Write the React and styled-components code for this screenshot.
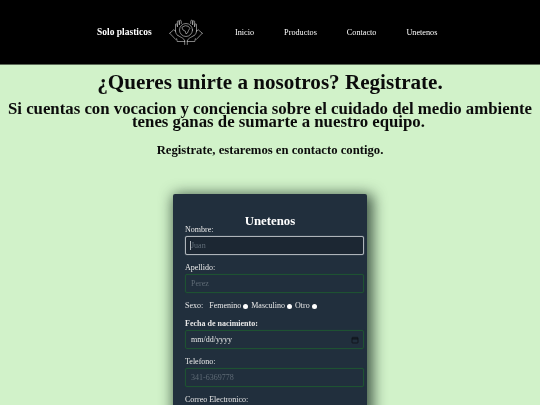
import React from "react";
import styled, { createGlobalStyle } from "styled-components";

const GlobalStyle = createGlobalStyle`
  html, body {
    margin: 0;
    padding: 0;
    height: 405px;
    overflow: hidden;
    background-color: #d1f2c9;
    font-family: "Liberation Serif", "Times New Roman", serif;
  }

  #root {
    will-change: transform;
  }
`;

const Logo = () => (
  <LogoSvg viewBox="0 0 34 26" fill="none" stroke="#d6d6d6" strokeWidth="0.6" strokeLinejoin="round" strokeLinecap="round">
    <circle cx="17" cy="11" r="6.500" />
    <path d="M13.500 8l2.800-1.300 3 .6 1.600 2-1.300 2-1.100 2.600-1.500 1-.7-2.700-2.200-1.100-.9-1.800z" />
    <path d="M6.500 12V5.500c0-1 1.400-1 1.500 0l.4 2M8.400 7.500V2.500c0-1 1.600-1 1.700 0l.3 3M10.400 5.500V2c0-1.100 1.700-1.100 1.800 0l.1 2.500" />
    <path d="M27.500 12V5.500c0-1-1.400-1-1.500 0l-.4 2M25.600 7.500V2.500c0-1-1.600-1-1.700 0l-.3 3M23.600 5.500V2c0-1.100-1.700-1.100-1.800 0l-.1 2.500" />
    <path d="M6.500 12c0 1.800.8 3.200 2.200 4.400M27.500 12c0 1.800-.8 3.200-2.200 4.400" />
    <path d="M.7 14.200l4-3.400 1.800 1.200M33.300 14.200l-4-3.400-1.800 1.200" />
    <path d="M8.700 16.400l4 2.200c1.700 1 2.800 1.900 3 3.400M25.300 16.400l-4 2.200c-1.700 1-2.800 1.900-3 3.400" />
    <path d="M.7 14.200l6 6.300 1-.8.5 2.800h7.500M33.300 14.200l-6 6.300-1-.8-.5 2.800h-7.500" />
    <path d="M15.700 22v3.500M18.300 22v3.500" />
  </LogoSvg>
);

const App = () => (
  <>
    <GlobalStyle />
    <Header>
      <Brand>Solo plasticos</Brand>
      <Logo />
      <Nav>
        <NavLink href="#">Inicio</NavLink>
        <NavLink href="#">Productos</NavLink>
        <NavLink href="#">Contacto</NavLink>
        <NavLink href="#">Unetenos</NavLink>
      </Nav>
    </Header>
    <Main>
      <Title>¿Queres unirte a nosotros? Registrate.</Title>
      <Subtitle>
        Si cuentas con vocacion y conciencia sobre el cuidado del medio ambiente
        <SubtitleTail>tenes ganas de sumarte a nuestro equipo.</SubtitleTail>
      </Subtitle>
      <Note>Registrate, estaremos en contacto contigo.</Note>
      <Card>
        <CardTitle>Unetenos</CardTitle>
        <Field>
          <Label>Nombre:</Label>
          <InputWrap>
            <Input placeholder="Juan" $focused />
            <Caret />
          </InputWrap>
        </Field>
        <Field>
          <Label>Apellido:</Label>
          <Input placeholder="Perez" />
        </Field>
        <SexRow>
          <SexLabel>Sexo:</SexLabel>
          <Option>Femenino</Option>
          <Radio />
          <Option>Masculino</Option>
          <Radio />
          <Option>Otro</Option>
          <Radio />
        </SexRow>
        <Field>
          <Label $bold>Fecha de nacimiento:</Label>
          <DateBox>
            mm/dd/yyyy
            <CalendarIcon viewBox="0 0 12 12" fill="none" stroke="#0c0f14" strokeWidth="1.1">
              <rect x="1.500" y="2" width="9" height="8.500" rx="1" />
              <path d="M1.500 4.300h9" strokeWidth="1.600" />
            </CalendarIcon>
          </DateBox>
        </Field>
        <Field>
          <Label>Telefono:</Label>
          <Input placeholder="341-6369778" />
        </Field>
        <Field>
          <Label>Correo Electronico:</Label>
        </Field>
      </Card>
    </Main>
  </>
);

const Header = styled.header`
  height: 64px;
  background-color: #000;
  border-bottom: 1px solid #5c6b58;
  display: flex;
  align-items: center;
  padding-left: 97px;
  color: #fff;
`;

const Brand = styled.strong`
  font-size: 9.5px;
  width: 72px;
`;

const LogoSvg = styled.svg`
  width: 34px;
  height: 26px;
  display: block;
`;

const Nav = styled.nav`
  display: flex;
  gap: 30px;
  margin-left: 32px;
`;

const NavLink = styled.a`
  color: #fff;
  font-size: 8.2px;
  text-decoration: none;
`;

const Main = styled.main`
  display: flex;
  flex-direction: column;
  align-items: center;
  color: #0b0b0b;
`;

const Title = styled.h1`
  margin: 4px 0 0;
  font-size: 21.1px;
  line-height: 26px;
  white-space: nowrap;
`;

const Subtitle = styled.h2`
  margin: 7px 0 0;
  font-size: 16.8px;
  line-height: 13px;
  text-align: center;
  white-space: nowrap;
`;

const SubtitleTail = styled.span`
  display: block;
  padding-left: 17px;
`;

const Note = styled.h3`
  margin: 15px 0 0;
  font-size: 12.7px;
  line-height: 15px;
`;

const Card = styled.section`
  margin-top: 36px;
  width: 194px;
  height: 240px;
  box-sizing: border-box;
  padding: 20px 3px 0 12px;
  background-color: #212f3d;
  border-radius: 2px;
  box-shadow: 3px 3px 14px 3px rgba(20, 40, 30, 0.75);
  color: #e8e8e8;
`;

const CardTitle = styled.h2`
  margin: 0 0 -4px;
  font-size: 12.8px;
  line-height: 15px;
  color: #fff;
  text-align: center;
  padding-right: 9px;
`;

const Field = styled.div`
  margin-bottom: 8px;
`;

const Label = styled.label`
  display: block;
  font-size: 8px;
  font-weight: ${(props) => (props.$bold ? 700 : 400)};
  line-height: 10px;
  margin-bottom: 1px;
`;

const InputWrap = styled.div`
  position: relative;
`;

const Input = styled.input`
  display: block;
  width: 100%;
  height: 19px;
  box-sizing: border-box;
  padding: 0 5px;
  font-family: inherit;
  font-size: 8px;
  color: #e8e8e8;
  background-color: ${(props) => (props.$focused ? "#1c2733" : "#212f3d")};
  border: 1px solid ${(props) => (props.$focused ? "#aeb4ba" : "#1e5232")};
  box-shadow: 0 0 1px ${(props) => (props.$focused ? "#aeb4ba" : "#1e5232")};
  border-radius: 2px;
  outline: none;

  &::placeholder {
    color: #5f6b76;
    opacity: 1;
  }
`;

const Caret = styled.span`
  position: absolute;
  left: 5px;
  top: 5px;
  width: 1px;
  height: 9px;
  background-color: #aeb4ba;
`;

const SexRow = styled.div`
  display: flex;
  align-items: center;
  font-size: 8px;
  line-height: 10px;
  margin: 8px 0;
`;

const SexLabel = styled.span`
  margin-right: 6px;
`;

const Option = styled.span`
  margin-right: 2px;
`;

const Radio = styled.span`
  width: 5px;
  height: 5px;
  border-radius: 50%;
  background-color: #fff;
  margin-right: 3px;
`;

const DateBox = styled.div`
  height: 19px;
  box-sizing: border-box;
  padding: 0 4px 0 5px;
  display: flex;
  align-items: center;
  justify-content: space-between;
  font-size: 8px;
  color: #e8e8e8;
  border: 1px solid #1e5232;
  box-shadow: 0 0 1px #1e5232;
  border-radius: 2px;
`;

const CalendarIcon = styled.svg`
  width: 8px;
  height: 8px;
`;

export default App;
